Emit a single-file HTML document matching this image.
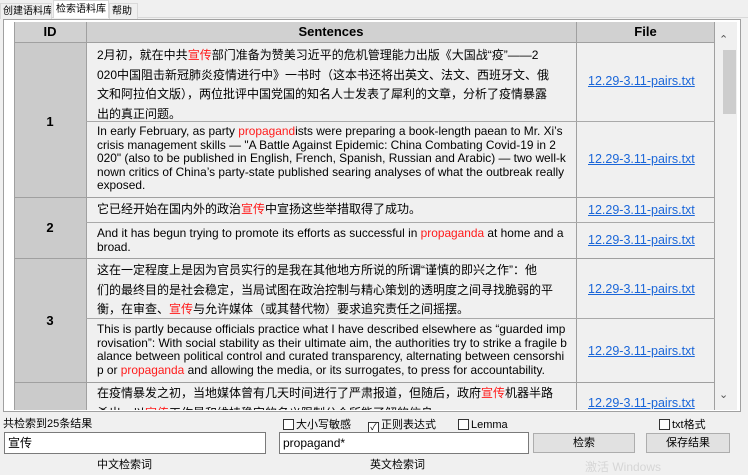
<!DOCTYPE html>
<html><head><meta charset="utf-8"><style>
*{margin:0;padding:0;box-sizing:border-box}
body{width:748px;height:468px;background:#f0f0f0;font-family:"Liberation Sans","Noto Sans CJK SC",sans-serif;position:relative;overflow:hidden;color:#000}
.a{position:absolute}
.tab{position:absolute;top:2px;height:16px;font-size:10px;line-height:15px;padding:0 2px;border:1px solid #d9d9d9;border-bottom:none;background:#f0f0f0;white-space:nowrap;overflow:hidden}
.cn{font-size:12px;line-height:19.5px}
.en{font-size:11.9px;line-height:13.5px}
.r{color:#ff1a1a}
.lk{position:absolute;left:588px;font-size:12.5px;color:#1a66d9;text-decoration:underline;font-family:"Liberation Sans",sans-serif}
.hl{position:absolute;left:86px;width:629px;height:1px;background:#a9a9a9}
.id{position:absolute;left:14px;width:72px;font-weight:bold;font-size:13px;text-align:center}
.cb{position:absolute;top:419px;font-size:11px;line-height:12px}
.cb i{display:inline-block;width:11px;height:11px;border:1px solid #333;background:#fff;vertical-align:-2px;margin-right:2px;font-style:normal;font-size:9px;line-height:9px;text-align:center}
.inp{position:absolute;top:432px;height:22px;background:#fff;border:1px solid #7a7a7a;font-size:12px;line-height:20px;padding-left:3px}
.btn{position:absolute;top:433px;height:20px;background:#e1e1e1;border:1px solid #adadad;font-size:11px;line-height:18px;text-align:center}
</style></head><body>
<div class="a" style="left:0;top:17px;width:748px;height:1px;background:#d9d9d9"></div>
<div class="tab" style="left:0;width:52px;top:3px">创建语料库</div>
<div class="tab" style="left:53px;width:56px;top:0;height:18px;background:#fff;line-height:17px">检索语料库</div>
<div class="tab" style="left:109px;width:29px;top:3px">帮助</div>
<div class="a" style="left:3px;top:19px;width:738px;height:393px;border:1px solid #a0a0a0;background:#fff"></div>
<div class="a" style="left:14px;top:22px;width:701px;height:388px;background:#f0f0f0"></div>
<div class="a" style="left:14px;top:22px;width:72px;height:388px;background:#cbcbcb"></div>
<div class="a" style="left:14px;top:22px;width:701px;height:21px;background:#d1d1d1;border-bottom:1px solid #a0a0a0"></div>
<div class="a" style="left:14px;top:24px;width:72px;text-align:center;font-weight:bold;font-size:13px">ID</div>
<div class="a" style="left:86px;top:24px;width:490px;text-align:center;font-weight:bold;font-size:13px">Sentences</div>
<div class="a" style="left:576px;top:24px;width:139px;text-align:center;font-weight:bold;font-size:13px">File</div>
<div class="a" style="left:14px;top:22px;width:1px;height:388px;background:#a0a0a0"></div>
<div class="a" style="left:86px;top:22px;width:1px;height:388px;background:#a0a0a0"></div>
<div class="a" style="left:576px;top:22px;width:1px;height:388px;background:#a0a0a0"></div>
<div class="a" style="left:714px;top:22px;width:1px;height:388px;background:#a0a0a0"></div>
<div class="hl" style="top:121px"></div>
<div class="a" style="left:14px;top:197px;width:701px;height:1px;background:#a0a0a0"></div>
<div class="hl" style="top:222px"></div>
<div class="a" style="left:14px;top:258px;width:701px;height:1px;background:#a0a0a0"></div>
<div class="hl" style="top:318px"></div>
<div class="a" style="left:14px;top:382px;width:701px;height:1px;background:#a0a0a0"></div>
<div class="id" style="top:114px">1</div>
<div class="id" style="top:220px">2</div>
<div class="id" style="top:313px">3</div>
<div class="a cn" style="left:97px;top:46px;white-space:nowrap">2月初，就在中共<span class="r">宣传</span>部门准备为赞美习近平的危机管理能力出版《大国战“疫”——2<br>020中国阻击新冠肺炎疫情进行中》一书时（这本书还将出英文、法文、西班牙文、俄<br>文和阿拉伯文版），两位批评中国党国的知名人士发表了犀利的文章，分析了疫情暴露<br>出的真正问题。</div>
<div class="a en" style="left:97px;top:125px;white-space:nowrap">In early February, as party <span class="r">propagand</span>ists were preparing a book-length paean to Mr. Xi’s<br>crisis management skills — "A Battle Against Epidemic: China Combating Covid-19 in 2<br>020" (also to be published in English, French, Spanish, Russian and Arabic) — two well-k<br>nown critics of China’s party-state published searing analyses of what the outbreak really<br>exposed.</div>
<div class="a cn" style="left:97px;top:200px;white-space:nowrap">它已经开始在国内外的政治<span class="r">宣传</span>中宣扬这些举措取得了成功。</div>
<div class="a en" style="left:97px;top:227px;white-space:nowrap">And it has begun trying to promote its efforts as successful in <span class="r">propaganda</span> at home and a<br>broad.</div>
<div class="a cn" style="left:97px;top:261px;white-space:nowrap">这在一定程度上是因为官员实行的是我在其他地方所说的所谓“谨慎的即兴之作”：他<br>们的最终目的是社会稳定，当局试图在政治控制与精心策划的透明度之间寻找脆弱的平<br>衡，在审查、<span class="r">宣传</span>与允许媒体（或其替代物）要求追究责任之间摇摆。</div>
<div class="a en" style="left:97px;top:323px;white-space:nowrap">This is partly because officials practice what I have described elsewhere as “guarded imp<br>rovisation”: With social stability as their ultimate aim, the authorities try to strike a fragile b<br>alance between political control and curated transparency, alternating between censorshi<br>p or <span class="r">propaganda</span> and allowing the media, or its surrogates, to press for accountability.</div>
<div class="a" style="left:87px;top:383px;width:489px;height:27px;overflow:hidden"><div class="cn" style="margin:1px 0 0 10px;white-space:nowrap">在疫情暴发之初，当地媒体曾有几天时间进行了严肃报道，但随后，政府<span class="r">宣传</span>机器半路<br>杀出，以<span class="r">宣传</span>工作最和维持稳定的名义限制公众所能了解的信息。</div></div>
<div class="lk" style="top:74px">12.29-3.11-pairs.txt</div>
<div class="lk" style="top:152px">12.29-3.11-pairs.txt</div>
<div class="lk" style="top:203px">12.29-3.11-pairs.txt</div>
<div class="lk" style="top:233px">12.29-3.11-pairs.txt</div>
<div class="lk" style="top:282px">12.29-3.11-pairs.txt</div>
<div class="lk" style="top:344px">12.29-3.11-pairs.txt</div>
<div class="lk" style="top:396px;height:13px;overflow:hidden">12.29-3.11-pairs.txt</div>
<div class="a" style="left:715px;top:22px;width:22px;height:388px;background:#f0f0f0"></div>
<div class="a" style="left:719px;top:33px;font-size:11px;color:#555">&#8963;</div>
<div class="a" style="left:723px;top:50px;width:13px;height:64px;background:#cdcdcd"></div>
<div class="a" style="left:719px;top:388px;font-size:11px;color:#555">&#8964;</div>
<div class="a" style="left:3px;top:415px;font-size:11px">共检索到25条结果</div>
<div class="cb" style="left:283px"><i></i>大小写敏感</div>
<div class="cb" style="left:368px"><i>✓</i>正则表达式</div>
<div class="cb" style="left:458px"><i></i>Lemma</div>
<div class="cb" style="left:659px"><i></i>txt格式</div>
<div class="inp" style="left:4px;width:262px">宣传</div>
<div class="inp" style="left:279px;width:250px">propagand*</div>
<div class="btn" style="left:533px;width:102px">检索</div>
<div class="btn" style="left:646px;width:84px">保存结果</div>
<div class="a" style="left:97px;top:456px;font-size:11px">中文检索词</div>
<div class="a" style="left:370px;top:456px;font-size:11px">英文检索词</div>
<div class="a" style="left:585px;top:458px;font-size:12px;color:#d6d6d6">激活 Windows</div>
</body></html>
